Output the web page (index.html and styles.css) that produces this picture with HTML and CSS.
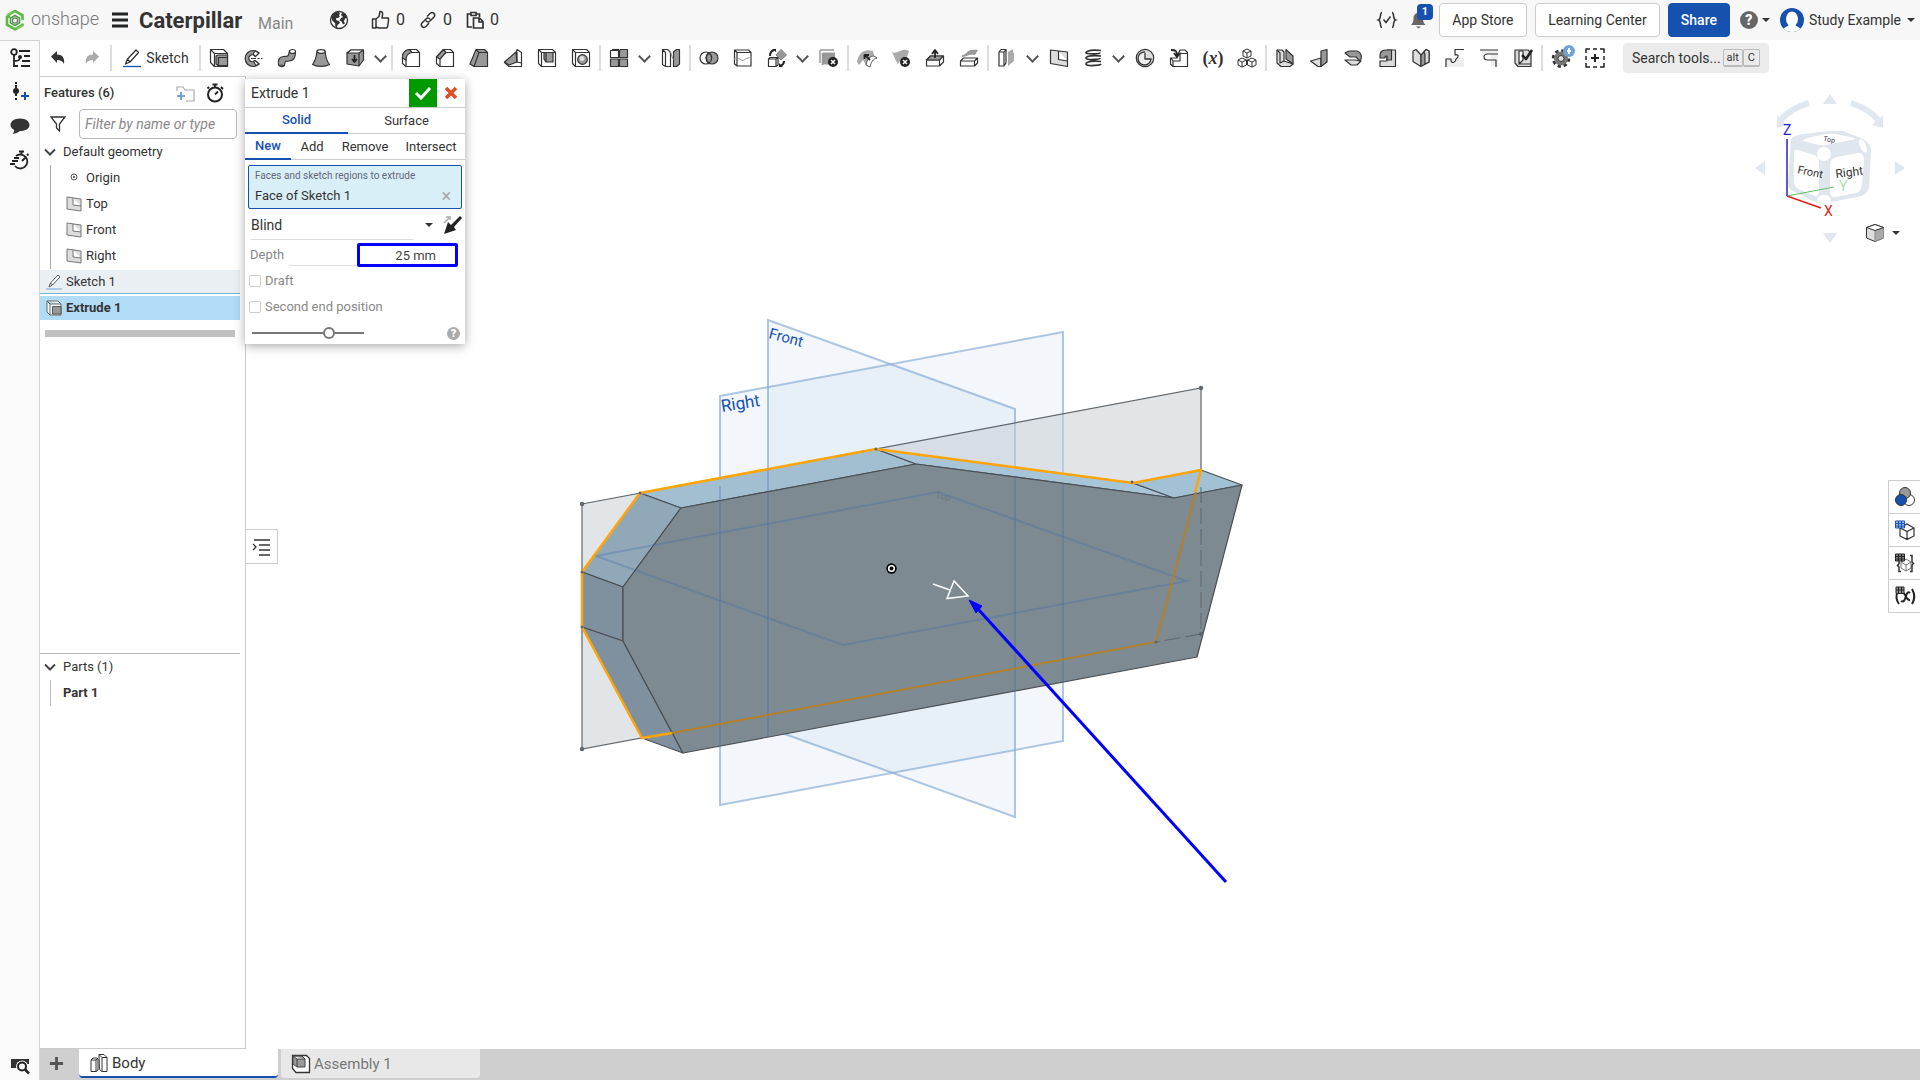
FILE: index.html
```
<!DOCTYPE html>
<html lang="en">
<head>
<meta charset="utf-8">
<title>Caterpillar | Main</title>
<link rel="stylesheet" href="styles.css">
</head>
<body>
<div class="app">
<header class="topbar">
  <a class="brand" href="#" aria-label="Onshape home">
    <svg class="brand-mark" viewBox="0 0 20 22"><path d="M4 9V5.500L10 2l7.500 4.300v5M17.500 14.500v1.500L10 20.300 6 18M2 6.500v9.200l5 2.900" fill="none" stroke="#5cb947" stroke-width="2.600"/><path d="M10 6.500l4.500 2.600v4.800L10 16.500l-4.500-2.600V9.100z" fill="none" stroke="#49a33c" stroke-width="1.600"/><circle cx="10" cy="11.500" r="2.600" fill="none" stroke="#777" stroke-width="1.300"/><path d="M2 6l5-3M12 20l6-3.500" stroke="#7fce62" stroke-width="2"/></svg>
    <span>onshape</span>
  </a>
  <button class="plain menu" aria-label="Menu"><svg viewBox="0 0 16 16"><path d="M0 2h16M0 8h16M0 14h16" stroke="#222" stroke-width="3"/></svg></button>
  <h1>Caterpillar</h1><span class="branch">Main</span>
  <button class="plain globe" aria-label="Public document"><svg class="i20" viewBox="0 0 20 20"><circle cx="10" cy="10" r="8.500" fill="#fff" stroke="#333" stroke-width="1.300"/><path d="M2 7l3-4 4-1.300 2 1.500-1 2 1 1-2 2-1.500-.5L7 10l3 1 1 2-2.500 2L8 18l-1.500-1L6 13 3.500 11zM13 3l3 1 2 4-2 .5-1 3 1 2-2 1-1.500-3-2-1L12 8l2-1-2-2z" fill="#333"/></svg></button>
  <button class="plain stat"><svg class="i20" viewBox="0 0 20 20"><path d="M1.500 9H5v9H1.500zM5 9l3-2.500 1-5c2.500-.5 3 2 2.500 3.500L11 8h6.500v2.500l-1 6.500-1 1H8l-3-1" fill="none" stroke="#333" stroke-width="1.500" stroke-linejoin="round"/></svg><span>0</span></button>
  <button class="plain stat"><svg class="i20" viewBox="0 0 20 20"><path d="M9 6.500l3-3c3-2.500 6 1 4 3.500l-4 4c-1.500 1.500-3.500 1-4-.5M11 13l-3 3.500c-3 2.500-6-1-4-3.500l4-4c1.500-1.500 3.500-1 4 .5" fill="none" stroke="#333" stroke-width="1.500"/></svg><span>0</span></button>
  <button class="plain stat"><svg class="i20" viewBox="0 0 20 20"><path d="M7 17H2.500V4H6M11 4h3.500v3M6 2.500h5v3H6zM8.500 8h6l3.500 3.500V18H8.500zM14 8v4h4" fill="none" stroke="#333" stroke-width="1.700"/></svg><span>0</span></button>
  <span class="grow"></span>
  <button class="plain code" aria-label="Featurescript"><svg class="i20" viewBox="0 0 20 20"><path d="M5 2.500C2.500 2.500 4.500 9 1.500 10c3 1 1 7.500 3.500 7.500M15 2.500c2.500 0 .5 6.500 3.500 7.500-3 1-1 7.500-3.500 7.500" fill="none" stroke="#333" stroke-width="1.500"/><path d="M6.500 9.500l2.500 3 4.500-6" fill="none" stroke="#333" stroke-width="1.500"/></svg></button>
  <button class="plain bell" aria-label="Notifications"><svg class="i20" viewBox="0 0 20 20"><path d="M2 15c2-2 2.500-3.500 2.500-7 0-3 2-5 4.500-5s5 2 5 5c0 3.500.5 5 2.500 7zM7 16.500h5l-2.500 2z" fill="#666"/></svg><b class="badge">1</b></button>
  <button class="btn app-store">App Store</button>
  <button class="btn learning">Learning Center</button>
  <button class="btn share">Share</button>
  <button class="plain help" aria-label="Help"><span class="q">?</span><i class="caret"></i></button>
  <button class="plain user"><svg class="avatar" viewBox="0 0 24 24"><defs><clipPath id="c"><circle cx="12" cy="12" r="12"/></clipPath></defs><g clip-path="url(#c)"><path d="M0 0h24v24H0z" fill="#1651b0"/><ellipse cx="12" cy="11" rx="6" ry="7.500" fill="#fff"/><path d="M2 24c1-5 5-5 7-7h6c2 2 6 2 7 7z" fill="#fff"/></g></svg><span>Study Example</span><i class="caret"></i></button>
</header>
<div class="body">
<nav class="rail" aria-label="Panels">
  <button class="plain" aria-label="Feature list"><svg class="i20" viewBox="0 0 20 20"><g fill="none" stroke="#222" stroke-width="1.800"><circle cx="4" cy="4" r="2.800"/><path d="M4 7v11h4M4 13c5 0 6-1 6-4M9 3h11M14 8h6M12 13h8M11 18h9"/></g><circle cx="10" cy="9" r="2" fill="#222"/></svg></button>
  <button class="plain" aria-label="Add"><svg class="i20" viewBox="0 0 20 20"><circle cx="6" cy="9" r="3" fill="#222"/><path d="M6 0v2M6 3v3M6 12v2M6 16v2" stroke="#222" stroke-width="2"/><path d="M15 10v8M11 14h8" stroke="#1651b0" stroke-width="2"/></svg></button>
  <button class="plain" aria-label="Comments"><svg class="i20" viewBox="0 0 20 20"><path d="M10 2.500c5.500 0 9.500 2.800 9.500 6.500S15.500 15 10 15c-2 1.500-4.500 2.700-7.500 3 1-1 1.700-2.500 1.700-4C2 12.800.5 11 .5 9 .5 5.300 4.500 2.500 10 2.500z" fill="#333"/></svg></button>
  <button class="plain" aria-label="History"><svg class="i20" viewBox="0 0 20 20"><g fill="none" stroke="#222" stroke-width="1.800"><path d="M6 6a7 7 0 1 1-1 10M9 1.500h5M11.500 2v3M17 4l1.500 1.500M12 11l3-3M4 8h5M2 11h6M0 14h5"/></g></svg></button>
  <span class="grow"></span>
  <button class="plain find" aria-label="Find"><svg class="i20" viewBox="0 0 20 20"><path d="M1 3h18v5H1zM1 3h6v9H1z" fill="#333"/><circle cx="12" cy="10.500" r="6" fill="#fafafa"/><circle cx="12" cy="10.500" r="4" fill="none" stroke="#222" stroke-width="2"/><path d="M15 13.500l4 4" stroke="#222" stroke-width="2.500"/></svg></button>
</nav>
<div class="work">
<div class="toolbar" role="toolbar">
  <button class="t"><svg viewBox="0 0 20 20"><path d="M3 8.500L9 3v3.500c5 0 8 3 7 9.500-1.500-3-3.500-4-7-4V15z" fill="#333"/></svg></button>
  <button class="t"><svg viewBox="0 0 20 20"><path d="M17 8.500L11 3v3.500c-5 0-8 3-7 9.500 1.500-3 3.500-4 7-4V15z" fill="#aaa"/></svg></button>
  <i class="s"></i>
  <button class="t sketch"><svg viewBox="0 0 20 20"><path d="M3.500 16l2-5L14 2l2.500 2.500L8 14zM5.500 11L8 14" fill="#fff" stroke="#333" stroke-width="1.300"/><path d="M1 18.500h18" stroke="#1651b0" stroke-width="1.300"/></svg><span>Sketch</span></button>
  <i class="s"></i>
  <button class="t"><svg viewBox="0 0 20 20"><path class="w" d="M1.500 1.500h13l4 4v13h-13l-4-4z"/><path class="n" d="M1.500 1.500l4 4h13M5.500 5.500v13"/><path class="g" d="M7 8l2-1h9.500v10.500H9L7 16zM9.500 9.500h9M9.500 9v8"/></svg></button>
  <button class="t"><svg viewBox="0 0 20 20"><path class="g" d="M16 5A8 8 0 1 0 16 16l-4-3.500a3.500 3.500 0 1 1 0-4.500z"/><path class="w" d="M12 3l4 2-3.500 3.500L10 6zM12 12.500l4 3.500-3 1.500-2.500-4z"/><path class="n" d="M8 10.500h5M14.500 10.500h2M18 10.500h1.500"/></svg></button>
  <button class="t"><svg viewBox="0 0 20 20"><path class="g" d="M1.500 17c-1-5 1-8.500 5-8.500 5 0 5 0 6-6l6 1.500c0 6-2.500 9-6.500 9-4 0-4 0-4.500 4.500z"/><ellipse class="w" cx="15.500" cy="3.500" rx="3" ry="2"/><path class="n" d="M1.500 17c1 2 5 2 6 .5"/></svg></button>
  <button class="t"><svg viewBox="0 0 20 20"><path class="g" d="M6 3c-.5 6-1 9-4.500 13.500 4 2.500 13 2.500 17 0C15 12 14.500 9 14 3z"/><ellipse class="w" cx="10" cy="3.500" rx="4" ry="1.800"/></svg></button>
  <button class="t"><svg viewBox="0 0 20 20"><path class="g" d="M2 5l4-3h12.500v10L14 18 2 16z"/><path class="w" d="M2 5l4-3h12.500L14 5z"/><path class="n" d="M14 5v13"/><path d="M9.500 7v6M7 11l2.500 3 2.500-3" stroke="#222" stroke-width="1.800" fill="none"/></svg></button>
  <button class="c" aria-label="More"></button><i class="s"></i>
  <button class="t"><svg viewBox="0 0 20 20"><path class="w" d="M1.500 9c0-4 3-7 7-7.500h7l3 3v14H5l-3.500-3z"/><path class="g" d="M1.500 9c0-4 3-7 7-7.500l2.500 3C7 5 5 7 5 12l-3.500-2z"/><path class="n" d="M5 11v7.500M10.500 4.500h8"/></svg></button>
  <button class="t"><svg viewBox="0 0 20 20"><path class="w" d="M1.500 9l7-7.500h7l3 3v14H5l-3.500-3z"/><path class="g" d="M1.500 9l7-7.500 2.500 3L5 11z"/><path class="n" d="M5 11v7.500M10.500 4.500h8"/></svg></button>
  <button class="t"><svg viewBox="0 0 20 20"><path class="g" d="M7 1.500h8.500l3 3v14H5l-4-2.500zM10 4.500h8.500M10 4.500l-5 14M7 1.500l3 3"/></svg></button>
  <button class="t"><svg viewBox="0 0 20 20"><path class="w" d="M14 1.500l4.500 3v14H6l-4.500-4H12z"/><path class="g" d="M1.500 14L13 4l1 10-8 3z"/><path class="n" d="M14 4v10l4.500 1"/></svg></button>
  <button class="t"><svg viewBox="0 0 20 20"><path class="w" d="M1.500 1.500h14l3 3v14H4.500l-3-3z"/><path class="g" d="M7 4.500h9V14H9l-2-3z"/><path class="n" d="M1.500 1.500l3 3h14M4.500 4.500v14M9 4.500V14"/></svg></button>
  <button class="t"><svg viewBox="0 0 20 20"><path class="w" d="M1.500 1.500h14l3 3v14H4.500l-3-3z"/><path class="n" d="M1.500 1.500l3 3h14M4.500 4.500v14"/><circle class="g" cx="11.500" cy="11.500" r="4.800"/><circle cx="11" cy="10.500" r="2.500" fill="#ddd"/></svg></button>
  <i class="s"></i>
  <button class="t"><svg viewBox="0 0 20 20"><path class="w" d="M1.500 2.500h8v7h-8z"/><path class="g" d="M10.500 2.500l1-1h7v8h-8zM1.500 11h8v7.500h-8zM10.500 11h8v7.500h-8z"/><path class="n" d="M3 1.500h7"/></svg></button>
  <button class="c" aria-label="More"></button>
  <button class="t"><svg viewBox="0 0 20 20"><path class="w" d="M1.500 1.500h5l3 3v14h-5l-3-2zM1.500 1.500l3 3v14"/><path class="g" d="M12.500 4l3-2.500h3V16l-3 2.500h-3z"/><path d="M7 2c4 0 3 10 7 10" stroke="#888" fill="none"/></svg></button>
  <i class="s"></i>
  <button class="t"><svg viewBox="0 0 20 20"><circle class="w" cx="7" cy="10" r="6"/><circle class="g" cx="13" cy="10" r="6"/><path class="n" d="M10 5a6 6 0 0 0 0 10 6 6 0 0 0 0-10"/></svg></button>
  <button class="t"><svg viewBox="0 0 20 20"><path class="w" d="M1.500 2h14l2.500 2.500V18H4l-2.500-2zM1.500 2L4 4.500h14M4 4.500V18"/><path d="M1 11c5-3 7 3 10 1s5-3 8-2" fill="none" stroke="#999"/></svg></button>
  <button class="t"><svg viewBox="0 0 20 20"><path class="w" d="M1.500 11l1.500-1.500h8V17l-2 1.500H1.500zM1.500 11H9v7.500M9 11l2-1.500"/><path d="M9 7l5-5.500 5.500 5.500-5.500 5z" fill="#999" stroke="#777"/><path d="M3 8c0-3 1-5 4-6M17 13c0 3-1 4-4 5" stroke="#222" stroke-width="2" fill="none"/><path d="M5 1h4v3zM12 15v4h4z" fill="#222"/></svg></button>
  <button class="c" aria-label="More"></button>
  <button class="t"><svg viewBox="0 0 20 20"><path d="M1 2h14M1 2v13M3.500 5v12" stroke="#999" fill="none" stroke-width="1.500"/><path d="M4 4.500h12v12H4z" fill="#999"/><circle cx="14" cy="14" r="5" fill="#222"/><path d="M12 12l4 4M16 12l-4 4" stroke="#fff" stroke-width="1.500"/></svg></button>
  <i class="s"></i>
  <button class="t"><svg viewBox="0 0 20 20"><path d="M0 14C1 5 8 0 16 3l1 4-8 10-3-5-4 5z" fill="#aaa"/><path d="M9 17c1-6 4-9 8-9l3 2c-4 1-6 4-7 9z" fill="#fff" stroke="#555"/><path d="M13 12L8 7M12 7H7.500V11" stroke="#222" stroke-width="1.800" fill="none"/></svg></button>
  <button class="t"><svg viewBox="0 0 20 20"><path d="M1 4c6 3 9-5 17-1l-4 12c-4-3-6-3-7 2z" fill="#aaa"/><circle cx="14" cy="14" r="5" fill="#222"/><path d="M12 12l4 4M16 12l-4 4" stroke="#fff" stroke-width="1.500"/></svg></button>
  <button class="t"><svg viewBox="0 0 20 20"><path class="w" d="M1.500 12l4-4h13v6l-4 4h-13zM1.500 12h13v6"/><path class="g" d="M1.500 12l4-4h13l-4 4z"/><path d="M10 10V3M7 6l3-4 3 4" stroke="#222" stroke-width="1.800" fill="none"/></svg></button>
  <button class="t"><svg viewBox="0 0 20 20"><path d="M3 7c5 0 4-7 16-5l-3 5c-7-1-8 2-13 2z" fill="#999"/><path class="w" d="M1.500 13l3-3h14v5l-3 3h-14zM1.500 13h14v5M15.500 13l3-3"/></svg></button>
  <i class="s"></i>
  <button class="t"><svg viewBox="0 0 20 20"><path class="w" d="M2 4l2-2.500h5V15l-2 3H2zM2 4h5v14M7 4l2-2.500"/><path d="M11 4l5-3v4h1v8l-6 5z" fill="#aaa"/></svg></button>
  <button class="c" aria-label="More"></button>
  <button class="t"><svg viewBox="0 0 20 20"><path class="l" d="M1.500 2l17 2v14.500l-17-3zM9.500 3v8.500l9 1.500"/></svg></button>
  <button class="t"><svg viewBox="0 0 20 20"><path d="M18 2.500C4 1 1 5 4 5.500s13 1 13-1M18 8C4 6.500 1 10 4 11s13 .5 13-1M18 13.500C4 12 1 16 4 17s13 .5 14-1" fill="none" stroke="#333" stroke-width="1.700"/></svg></button>
  <button class="c" aria-label="More"></button>
  <button class="t"><svg viewBox="0 0 20 20"><circle class="l" cx="10" cy="10" r="8.700"/><path d="M10 5v6h6A6.500 6.500 0 1 1 10 4" fill="#eee" stroke="#333" stroke-width="1.300"/></svg></button>
  <button class="t"><svg viewBox="0 0 20 20"><path class="w" d="M8 9l3-7h5l2.500 2.500v14H4L1.500 16v-6H8z"/><path class="n" d="M11 5l2 .5h5M11 5v8H4v5M2 10l2 3"/><path d="M2 2c5 0 6 1 6 6M5 5l3 4 3-4" stroke="#222" stroke-width="1.800" fill="none"/></svg></button>
  <button class="t var">(<i>x</i>)</button>
  <button class="t"><svg viewBox="0 0 20 20"><path class="w thin" d="M6 3l4-2 4 2v5l-4 2-4-2zM6 3l4 2 4-2M10 5v5M1 12l4-2 4.500 2v5L5 19l-4-2zM1 12l4 2 4.500-2M5 14v5M10.500 12l4.500-2 4 2v5l-4 2-4.500-2zM10.500 12l4.500 2 4-2M15 14v5"/></svg></button>
  <i class="s"></i>
  <button class="t"><svg viewBox="0 0 20 20"><path class="l" d="M2 2h5l2 2v9l9 3-3 2.500H6L2 15z"/><path class="g" d="M11 1.500L18 8v8l-7-5z"/><path class="n" d="M2 2l3 3v10l4-2"/></svg></button>
  <button class="t"><svg viewBox="0 0 20 20"><path class="l" d="M1.500 13L12 10v8.500H9z"/><path class="g" d="M12 3l6-1.500V14l-6 4.500z"/></svg></button>
  <button class="t"><svg viewBox="0 0 20 20"><path class="l" d="M2 12h10l6 1-4 4H8z"/><path class="g" d="M2 5l4-2h8c4 1 6 6 3 10l-4-4H7z"/></svg></button>
  <button class="t"><svg viewBox="0 0 20 20"><path class="l" d="M10 2h8.500v16.500H3V13h7z"/><path class="g" d="M3 9c0-6 2-7 7-7h4.500v10H10V8c-2 0-2 0-2 2H3z"/></svg></button>
  <button class="t"><svg viewBox="0 0 20 20"><path class="l" d="M2 3l3-1.500L10 7v11.500l-8-5z"/><path class="g" d="M10 7l5-5.500 3 1.500v11l-8 4.500z"/><path class="l" d="M13 4l2-2.500 3 1.500v11l-4 2V6z"/></svg></button>
  <button class="t"><svg viewBox="0 0 20 20"><path d="M1 10h18v9H1z" fill="#eee"/><path class="n" d="M1 19v-8h5v2c1 3 5 1 5-2 3-2 3-5-1-4V1.500h9"/></svg></button>
  <button class="t"><svg viewBox="0 0 20 20"><path d="M3 2h16v16H12V6H3z" fill="#eee"/><path class="n" d="M1 2h18M19 6H9c-3 0-4 1-4 3s1 3 4 3h8v7"/></svg></button>
  <button class="t"><svg viewBox="0 0 20 20"><path class="l" d="M2 2h13l3 3v13.500H5L2 15z"/><path class="w" d="M6 3h4v9l-4 4zM6 16h12"/><path d="M9 7l4 4 6-9" stroke="#222" stroke-width="2.500" fill="none"/></svg></button>
  <i class="s"></i>
  <button class="t gear"><svg viewBox="0 0 20 20"><circle cx="10" cy="10.500" r="7.500" fill="none" stroke="#333" stroke-width="3.500" stroke-dasharray="3.200 2.690"/><circle cx="10" cy="10.500" r="5" fill="none" stroke="#777" stroke-width="4"/><circle cx="10" cy="10.500" r="3" fill="#ddd" stroke="#333"/><circle cx="18" cy="3" r="6" fill="#72a2d6"/><path d="M18 0v6M16 3h4" stroke="#fff" stroke-width="1.800"/></svg></button>
  <button class="t"><svg viewBox="0 0 20 20"><path d="M1 5V1h4M8 1h4M15 1h4v4M19 8v4M19 15v4h-4M12 19H8M5 19H1v-4M1 12V8" fill="none" stroke="#222" stroke-width="1.500"/><path d="M10 6v8M6 10h8" stroke="#222" stroke-width="2"/></svg></button>
  <button class="search">Search tools... <kbd>alt</kbd><kbd>C</kbd></button>
</div>
<div class="stage">
<aside class="features">
  <div class="fhead"><span>Features (6)</span>
    <button class="plain" aria-label="New folder"><svg class="i20" viewBox="0 0 20 20"><path d="M2 8V4h6l2 3h9v11h-8" fill="none" stroke="#aaa" stroke-width="1.200"/><path d="M6 9v8M2 13h8" stroke="#72a2d6" stroke-width="2"/></svg></button>
    <button class="plain" aria-label="Regeneration times"><svg class="i20" viewBox="0 0 20 20"><circle cx="10" cy="11.500" r="7" fill="none" stroke="#222" stroke-width="2"/><path d="M7.500 1.500h5M10 1v4M16 4l2 2M10 11.500l3-3M4 4L2.500 5.500" stroke="#222" stroke-width="1.800"/></svg></button></div>
  <div class="filter"><svg class="i20" viewBox="0 0 20 20"><path d="M3 3h14l-5.500 7v7L8.500 14v-4z" fill="none" stroke="#333" stroke-width="1.300"/></svg><input type="text" placeholder="Filter by name or type" aria-label="Filter by name or type"></div>
  <div class="row"><svg class="chev" viewBox="0 0 12 12"><path d="M1 3.500L6 8.500l5-5" fill="none" stroke="#444" stroke-width="2"/></svg><span>Default geometry</span></div>
  <div class="group">
    <div class="row"><svg class="i16" viewBox="0 0 16 16"><circle cx="8" cy="7" r="3" fill="none" stroke="#555"/><circle cx="8" cy="7" r="1" fill="#333"/></svg><span>Origin</span></div>
    <div class="row"><svg class="i16" viewBox="0 0 16 16"><path d="M1 1l14 2v12L1 13zM7 2v7l8 1" fill="#ddd" stroke="#777"/></svg><span>Top</span></div>
    <div class="row"><svg class="i16" viewBox="0 0 16 16"><path d="M1 1l14 2v12L1 13zM7 2v7l8 1" fill="#ddd" stroke="#777"/></svg><span>Front</span></div>
    <div class="row"><svg class="i16" viewBox="0 0 16 16"><path d="M1 1l14 2v12L1 13zM7 2v7l8 1" fill="#ddd" stroke="#777"/></svg><span>Right</span></div>
  </div>
  <div class="row item hover"><svg class="i16" viewBox="0 0 16 16"><path d="M3 13l1.500-4L12 1l2 2-7.500 8zM4.500 9l2 2" fill="#fff" stroke="#555"/><path d="M0 15h16" stroke="#72a2d6"/></svg><span>Sketch 1</span></div>
  <div class="row item active"><svg class="i16" viewBox="0 0 16 16"><path d="M1 1h11l3 3v11H4l-3-3zM1 1l3 3h11M4 4v11" fill="#fff" stroke="#666"/><path d="M6.500 6.500H15V14H6.500z" fill="#999" stroke="#555"/></svg><span>Extrude 1</span></div>
  <div class="rollback"></div>
  <span class="grow"></span>
  <div class="parts">
    <div class="row"><svg class="chev" viewBox="0 0 12 12"><path d="M1 3.500L6 8.500l5-5" fill="none" stroke="#444" stroke-width="2"/></svg><span>Parts (1)</span></div>
    <div class="row part"><b>Part 1</b></div>
  </div>
</aside>
<main class="canvas">
  <svg class="scene" viewBox="246 76 1674 973" role="img" aria-label="Model view">
    <path class="plane" d="M768 320L1015 409V817L768 728z"/>
    <path class="plane" d="M720 396L1063 332V741L720 805z"/>
    <path d="M582 504L1201 388V634L582 749z" fill="#c8cdd2" fill-opacity=".52" stroke="#5f676d" stroke-width="1.200"/>
    <g stroke="#4a4f53" stroke-width="1.200" stroke-linejoin="round">
      <path d="M640 493L876 449l40 15L681 508z" fill="#a2bfd1"/>
      <path d="M876 449l257 34 41 15L916 464z" fill="#a8c5d8"/>
      <path d="M1133 483l68-13 41 15-68 13z" fill="#a3c1d4"/>
      <path d="M640 493l41 15-58 79-41-15z" fill="#90a8b7"/>
      <path d="M582 572l41 15v54l-41-14z" fill="#7f909e"/>
      <path d="M582 627l41 14 60 112-41-15z" fill="#7f909e"/>
      <path d="M681 508l235-44 258 34 68-13-45 172-514 96-60-112v-54z" fill="#7d8a92"/>
    </g>
    <g fill="none" stroke="#3f6aa8" stroke-opacity=".3" stroke-width="2">
      <path d="M596 556L938 492l249 89-344 64z"/>
      <path d="M768 468V737M720 486V746M1015 477V691M1063 483V682"/>
    </g>
    <path d="M1201 487V634L1156 642" fill="none" stroke="#5f676d" stroke-dasharray="16 5"/>
    <path d="M1196 492L1156 642 672 733" fill="none" stroke="#b2802a" stroke-width="2"/>
    <path d="M672 733l-30 5-60-111v-55l58-79 236-44 257 34 68-13-6 22" fill="none" stroke="#ffa50a" stroke-width="2.500" stroke-linejoin="round"/>
    <g fill="#5f676d"><circle cx="582" cy="504" r="2.200"/><circle cx="582" cy="749" r="2.200"/><circle cx="1201" cy="388" r="2.200"/><circle cx="1201" cy="634" r="2.200"/><circle cx="876" cy="449" r="1.500"/><circle cx="1132" cy="482" r="1.500"/><circle cx="640" cy="493" r="1.500"/><circle cx="582" cy="572" r="1.500"/><circle cx="582" cy="627" r="1.500"/><circle cx="1156" cy="642" r="1.500"/></g>
    <circle cx="891.500" cy="568.500" r="5.200" fill="#000"/><circle cx="891.500" cy="568.500" r="2.800" fill="#000" stroke="#fff" stroke-width="1.600"/>
    <path d="M933 584l17 6M954 581l-7 17.500 21-2.500z" fill="none" stroke="#fff" stroke-width="1.500"/>
    <path d="M1226 882L978 609" stroke="#00f" stroke-width="3"/><path d="M969 600l13 6-6 7z" fill="#00f" stroke="#00f"/>
    <text class="label front" transform="translate(768 338) rotate(15)">Front</text>
    <text class="label" transform="translate(722 412) rotate(-9)">Right</text>
    <text class="ghost" transform="translate(935 498) rotate(10)">Top</text>
  </svg>

  <section class="dialog" aria-label="Extrude 1">
    <div class="dhead"><span>Extrude 1</span><button class="ok" aria-label="Accept"><svg viewBox="0 0 20 20"><path d="M3 10l5 5L17 5" fill="none" stroke="#fff" stroke-width="3"/></svg></button><button class="plain cancel" aria-label="Cancel"><svg viewBox="0 0 14 14"><path d="M2 2l10 10M12 2L2 12" stroke="#e04e27" stroke-width="3.500"/></svg></button></div>
    <div class="tabs two"><button class="on">Solid</button><button>Surface</button></div>
    <div class="tabs four"><button class="on">New</button><button>Add</button><button>Remove</button><button>Intersect</button></div>
    <div class="pick"><small>Faces and sketch regions to extrude</small><div><span>Face of Sketch 1</span><button class="plain" aria-label="Remove face">×</button></div></div>
    <div class="endtype"><select aria-label="End type"><option>Blind</option></select><i class="caret"></i><button class="plain" aria-label="Flip direction"><svg class="i20" viewBox="0 0 20 20"><path d="M1 19L5 7l3 3 9-9 2 2-8 9 2 3z" fill="#222"/><path d="M1 8l5-5M3 2l4 0v3" stroke="#aaa" stroke-width="1.500" fill="none"/></svg></button></div>
    <div class="depth"><label for="depth">Depth</label><i></i><input id="depth" type="text" value="25 mm"></div>
    <label class="check"><input type="checkbox">Draft</label>
    <label class="check"><input type="checkbox">Second end position</label>
    <div class="foot"><input type="range" value="71" aria-label="Opacity"><span class="q">?</span></div>
  </section>

  <button class="flyout" aria-label="Show list"><svg class="i20" viewBox="0 0 20 20"><path d="M2 3h16M7 8h11M7 13h11M7 18h11" stroke="#333" stroke-width="1.700"/><path d="M1 7l3 3-3 3" fill="none" stroke="#333" stroke-width="1.300"/></svg></button>

  <div class="viewcube">
  <svg viewBox="0 0 160 160" role="img" aria-label="View cube">
    <g fill="#e0e7ee"><path d="M88 11l7 10H81zM88 160l-7-10h14zM13 85l10-7v14zM163 85l-10-7v14z"/></g>
    <path d="M67 20q-18 5-28 17M109 20q18 6 27 17" fill="none" stroke="#e0e7ee" stroke-width="6"/><path d="M35 32v13l10-3zM141 32v13l-11-3z" fill="#e0e7ee"/>
    <path d="M49 56q4-4 12-5l26-3h14l20 8q8 4 8 12l-2 36q-1 8-12 10l-30 6q-8 1-16-3l-20-10q-3-2-3-7z" fill="#dfe6ed"/>
    <g fill="#fff"><path d="M61 58q0-3 24-7 5-1 9 0l18 4q4 1-8 3l-20 4q-6 1-18-3z"/><path d="M52 71q0-5 4-4l16 5q5 2 5 7v27q0 9-4 7l-15-6q-6-3-6-9z"/><path d="M88 82q0-7 7-8l21-4q6-1 6 6l-2 26q-1 7-6 8l-20 4q-6 1-6-5z"/><circle cx="82" cy="71" r="7"/><ellipse cx="82" cy="117" rx="7" ry="5"/><ellipse cx="121" cy="63" rx="3" ry="7" transform="rotate(-25 121 63)"/></g>
    <text x="55" y="90" transform="rotate(12 55 90)">Front</text><text class="big" x="94" y="95" transform="rotate(-7 94 95)">Right</text><text class="tiny" x="81" y="58" transform="rotate(10 82 58)">Top</text>
    <path d="M45 56v57" stroke="#22c" stroke-width="1.500"/><path d="M45 113l47-9" stroke="#5fc45f"/><path d="M45 113l34 12" stroke="#e02020" stroke-width="1.500"/>
    <text class="axis z" x="41" y="52">Z</text><text class="axis y" x="97" y="108">Y</text><text class="axis x" x="82" y="133">X</text>
  </svg>
  <button class="plain shade" aria-label="View options"><svg class="i20" viewBox="0 0 20 20"><path d="M1.500 4.500L10 1.500l8.500 3V15L10 18.500 1.500 15z" fill="#ddd" stroke="#333"/><path d="M10 7.500l8.500-3V15L10 18.500z" fill="#aaa" stroke="#888"/><path d="M1.500 4.500L10 1.500l8.500 3-8.500 3z" fill="#fff" stroke="#333"/></svg><i class="caret"></i></button>
  </div>

  <div class="side">
    <button aria-label="Appearance"><svg class="i20" viewBox="0 0 20 20"><circle cx="14" cy="13" r="5.500" fill="#fff" stroke="#333"/><circle cx="10" cy="6" r="5.500" fill="#999" stroke="#333"/><circle cx="6" cy="13" r="5.500" fill="#1651b0" stroke="#333"/></svg></button>
    <button aria-label="Configurations"><svg class="i20" viewBox="0 0 20 20"><path d="M5 8l7-4 7 4v8l-7 3.500L5 16zM5 8l7 3.500L19 8M12 11.500v8" fill="#fff" stroke="#333" stroke-width="1.200"/><path d="M.5 1h9v7h-9zM3.500 1v7M6.500 1v7M.5 3.500h9M.5 6h9" fill="#9cc4ee" stroke="#1651b0"/></svg></button>
    <button aria-label="Properties table"><svg class="i20" viewBox="0 0 20 20"><path d="M6 9l5-3 5 3v6l-5 3-5-3zM6 9l5 3 5-3M11 12v6" fill="#fff" stroke="#777"/><path d="M4 8v3l-1.500 1.500L4 14v4.500h2M15 2.500h2V9l1.500 1.500L17 12v6.500h-2" fill="none" stroke="#333" stroke-width="1.500"/><path d="M.5 1h9v7h-9zM3.500 1v7M6.500 1v7M.5 3.500h9M.5 6h9" fill="#888" stroke="#222"/></svg></button>
    <button aria-label="Variable table"><svg class="i20" viewBox="0 0 20 20"><path d="M3 5c-2 4-2 9 1 13M17 3c3 5 3 10 0 15M6 15c3 2 4-2 5-5s2-5 4-3M8 7c3 0 3 8 7 7" fill="none" stroke="#222" stroke-width="2"/><path d="M1 1h8v6.500H1zM3.500 1v6.500M6.500 1v6.500M1 4h8" fill="#999" stroke="#222"/></svg></button>
  </div>
</main>
</div>
<footer class="tabbar">
  <button class="add" aria-label="Add tab"><svg viewBox="0 0 16 16"><path d="M8 1v14M1 8h14" stroke="#555" stroke-width="3"/></svg></button>
  <button class="tab on"><svg class="i20" viewBox="0 0 20 20"><path d="M2 7l2-2h4l1 1v11l-2 1.500H2zM2 7h5v11.500M7 7l2-1.500M10 1.500h5l3 3v14h-5l-2.500-2zM10 1.500l3 3h5M13 4.500v14" fill="#fff" stroke="#333"/></svg><span>Body</span></button>
  <button class="tab"><svg class="i20" viewBox="0 0 20 20"><path d="M1.500 1.500h14l3 3v14H5l-3.500-4z" fill="#fff" stroke="#333" stroke-width="1.300"/><path d="M2 2h9l3 3v8H6l-4-3zM2 2l4 3h8M6 5v8" fill="#999" stroke="#444"/></svg><span>Assembly 1</span></button>
</footer>
</div>
</div>
</div>
</body>
</html>
```
FILE: styles.css
```
* { box-sizing: border-box; }
body { margin: 0; color: #333; background: #fff; font: 14px/20px Roboto, "Liberation Sans", sans-serif; }
button, input, select { font: inherit; color: inherit; padding: 0; margin: 0; }
button { cursor: pointer; white-space: nowrap; }
svg { display: block; flex: none; overflow: visible; }
.app { display: flex; flex-direction: column; height: 100vh; }
.grow { flex: 1; }
.plain { display: flex; align-items: center; border: 0; background: none; }
.i20 { width: 20px; height: 20px; }
.i16 { width: 16px; height: 16px; }
.caret { width: 0; height: 0; border: 4px solid transparent; border-top-color: #333; border-bottom: 0; }
.q { width: 18px; height: 18px; border-radius: 9px; background: #666; color: #fff; font-weight: 900; line-height: 18px; text-align: center; }

.topbar { display: flex; align-items: center; height: 40px; flex: none; padding: 0 5px; background: #f7f7f7; }
.brand { display: flex; align-items: center; gap: 6px; width: 107px; color: #777; font: 300 18px/24px Roboto, sans-serif; text-decoration: none; }
.brand span { padding-bottom: 2px; }
.brand-mark { width: 20px; height: 22px; }
.menu svg { width: 16px; height: 16px; }
h1 { width: 119px; margin: 0 0 0 11px; padding-top: 2px; font-size: 22px; line-height: 28px; font-weight: 700; }
.branch { width: 71px; padding-top: 8px; color: #888; font-size: 16px; }
.globe { margin-right: 22px; }
.stat { gap: 5px; width: 47px; font-size: 16px; }
.code { margin-right: 12px; }
.bell { position: relative; margin-right: 10px; }
.badge { position: absolute; left: 8px; top: -6px; width: 16px; height: 16px; border-radius: 4px; background: #1651b0; color: #fff; font-size: 11px; line-height: 16px; }
.btn { height: 34px; border: 1px solid #ccc; border-radius: 4px; background: #fff; }
.app-store { width: 88px; margin-right: 8px; }
.learning { width: 125px; margin-right: 8px; }
.share { width: 62px; margin-right: 10px; border-color: #1651b0; background: #1651b0; color: #fff; font-weight: 500; }
.help { gap: 4px; margin-right: 10px; }
.user { gap: 5px; }
.user .caret { margin-left: 1px; }
.avatar { width: 24px; height: 24px; }

.body { display: flex; flex: 1; min-height: 0; }
.rail { display: flex; flex-direction: column; align-items: center; gap: 14px; width: 40px; padding: 7px 0 4px; border: solid #d4d4d4; border-width: 1px 1px 0 0; background: #fafafa; }
.work { display: flex; flex: 1; flex-direction: column; min-width: 0; }

.toolbar { display: flex; align-items: center; height: 36px; flex: none; padding-left: 1px; }
.t { display: flex; align-items: center; justify-content: center; width: 34px; height: 32px; flex: none; border: 0; background: none; }
.t svg { width: 20px; height: 20px; }
.t svg, .w, .g, .l, .n { stroke-linejoin: round; }
.w, .g, .l, .n { stroke: #333; stroke-width: 1.2; fill: #fff; }
.thin { stroke-width: 1; }
.g { fill: #999; }
.l { fill: #ddd; }
.n { fill: none; }
.s { width: 2px; height: 26px; margin: 0 1px; flex: none; background: #ddd; }
.sketch { width: 85px; gap: 4px; }
.var { font: 700 18px/20px "Liberation Serif", serif; }
.c { width: 18px; height: 20px; flex: none; border: 0; background: none; }
.c::before { content: ""; display: block; width: 7px; height: 7px; margin: -3px 0 0 4px; border: solid #555; border-width: 0 2px 2px 0; transform: rotate(45deg); }
.search { display: flex; align-items: center; width: 146px; height: 30px; margin-left: 11px; padding-left: 9px; border: 0; border-radius: 4px; background: #ebebeb; }
kbd { height: 18px; padding: 0 3px; border: 1px solid #bbb; border-bottom-width: 2px; border-radius: 2px; font: 11px/16px Roboto, sans-serif; }
kbd:first-of-type { margin-left: 2px; }
kbd:last-of-type { padding: 0 4px; }

.stage { display: flex; flex: 1; min-height: 0; }
.features { display: flex; flex-direction: column; width: 206px; flex: none; border: solid #ccc; border-width: 1px 1px 1px 0; font-size: 13px; }
.fhead { display: flex; align-items: center; gap: 10px; height: 32px; padding: 0 20px 0 4px; font-weight: 500; }
.fhead span { flex: 1; }
.filter { display: flex; align-items: center; height: 30px; gap: 11px; padding: 0 8px; }
.filter input { flex: 1; min-width: 0; height: 30px; padding: 0 5px; border: 1px solid #bbb; border-radius: 4px; font-size: 14px; font-style: italic; }
.filter input::placeholder { color: #888; }
.row { display: flex; align-items: center; gap: 4px; height: 26px; flex: none; }
.chev { width: 12px; height: 12px; margin: 0 3px 0 4px; }
.group { margin: 0 0 0 10px; padding-left: 15px; border-left: 1px solid #aaa; }
.item { width: 200px; height: 24px; padding-left: 6px; }
.hover { margin-top: 1px; border-bottom: 1px solid #72b5da; background: #eaeff4; }
.active { margin-top: 2px; background: #b0dcf5; font-weight: 700; }
.rollback { width: 190px; height: 7px; margin: 10px 0 0 5px; background: #c1c1c1; }
.parts { width: 200px; height: 395px; border-top: 1px solid #bbb; }
.part { margin-left: 10px; padding-left: 12px; border-left: 1px solid #bbb; }

.canvas { position: relative; flex: 1; min-width: 0; }
.scene { position: absolute; width: 100%; height: 100%; }
.plane { fill: #5a91c4; fill-opacity: .07; stroke: #84a9d3; stroke-opacity: .65; stroke-width: 2; }
.label { font-size: 17px; fill: #1651b0; }
.front { font-size: 15px; }
.ghost { font-size: 9px; fill: #6b7884; }

.dialog { position: absolute; left: -1px; top: 3px; width: 220px; height: 265px; background: #fff; box-shadow: 0 2px 10px rgba(0, 0, 0, .35); font-size: 13px; }
.dhead { display: flex; align-items: center; height: 29px; padding-left: 6px; border-bottom: 1px solid #ccc; font-size: 14px; }
.dhead span { flex: 1; }
.ok { width: 28px; height: 28px; padding: 4px; border: 0; background: #009900; }
.cancel { justify-content: center; width: 28px; }
.cancel svg { width: 14px; height: 14px; }
.tabs { display: grid; height: 26px; border-bottom: 1px solid #ccc; }
.tabs button { height: 26px; border: 0; background: none; }
.tabs .on { border-bottom: 2px solid #1651b0; color: #1651b0; font-weight: 500; }
.two { grid-template-columns: 103px 1fr; }
.four { grid-template-columns: 46px 42px 64px 1fr; }
.pick { height: 44px; margin: 5px 3px 0; padding: 0 6px; border: 1px solid #1651b0; border-radius: 2px; background: #d9eff8; }
.pick small { display: block; color: #667; font-size: 10px; }
.pick div { display: flex; justify-content: space-between; }
.pick .plain { margin-right: 4px; color: #aaa; font-size: 18px; }
.endtype { display: flex; align-items: center; height: 30px; padding-left: 6px; margin-top: 1px; font-size: 14px; }
.endtype select { flex: 1; height: 30px; appearance: none; border: 0; border-bottom: 1px solid #ddd; background: none; }
.endtype .caret { margin: 0 10px 0 12px; }
.endtype .plain { margin-right: 2px; }
.depth { display: flex; align-items: center; height: 26px; margin-top: 2px; padding: 0 7px 0 5px; color: #888; }
.depth i { flex: 1; height: 22px; margin-left: 5px; border-bottom: 1px solid #ddd; }
.depth input { width: 101px; height: 24px; padding-right: 19px; border: 3px solid #00f; border-radius: 2px; color: #444; text-align: right; }
.check { display: flex; align-items: center; gap: 4px; height: 26px; padding-left: 4px; color: #888; }
.check input { appearance: none; width: 12px; height: 12px; border: 1px solid #ccc; border-radius: 2px; }
.foot { display: flex; align-items: center; justify-content: space-between; height: 26px; padding: 0 2px 0 7px; }
.foot input { appearance: none; width: 112px; height: 2px; background: #777; }
.foot input::-webkit-slider-thumb { appearance: none; width: 12px; height: 12px; border: 2px solid #777; border-radius: 6px; background: #fff; }
.foot .q { width: 13px; height: 13px; margin-right: 3px; background: #aaa; font-size: 11px; line-height: 13px; }

.flyout { position: absolute; left: -1px; top: 453px; display: flex; align-items: center; justify-content: center; width: 33px; height: 35px; border: 1px solid #ccc; background: #fff; }
.viewcube { position: absolute; top: 7px; right: 0; width: 178px; }
.viewcube > svg { width: 160px; height: 160px; }
.viewcube text { font-size: 11px; fill: #333; }
.viewcube .big { font-size: 12px; }
.viewcube .tiny { font-size: 7px; }
.viewcube .axis { font-size: 14px; }
.viewcube .z { fill: #22d; }
.viewcube .y { fill: #a5dfb0; }
.viewcube .x { fill: #e02020; }
.shade { gap: 7px; margin: -20px 20px 0 auto; }
.side { position: absolute; right: 0; top: 404px; width: 32px; border: 1px solid #ccc; border-width: 1px 0 0 1px; }
.side button { display: flex; align-items: center; justify-content: center; width: 100%; height: 33px; border: 0; border-bottom: 1px solid #ccc; background: #fff; }

.tabbar { display: flex; gap: 3px; height: 31px; flex: none; padding-bottom: 2px; background: #cfcfcf; }
.add { width: 36px; padding-left: 9px; border: 0; background: none; }
.add svg { width: 15px; height: 15px; }
.tab { display: flex; align-items: center; gap: 3px; width: 199px; padding: 0 10px; border: 0; border-radius: 0 0 4px 4px; background: #e8e8e8; color: #777; font-size: 15px; }
.tab.on { border-bottom: 2px solid #1651b0; background: #fff; color: #333; }
```
